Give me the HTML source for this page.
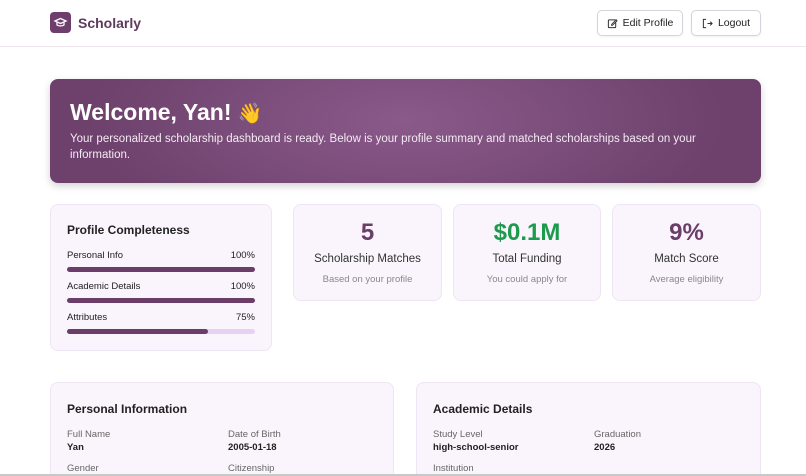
<!DOCTYPE html>
<html style="width:806px;height:476px;overflow:hidden"><head><meta charset="utf-8"><style>
*{box-sizing:border-box;margin:0;padding:0}
body{width:806px;height:476px;overflow:hidden;background:#fff;font-family:"Liberation Sans",sans-serif;color:#222;position:relative}
.hdr{position:absolute;left:0;top:0;width:806px;height:47px;border-bottom:1px solid #efe6f0;background:#fff}
.logo{position:absolute;left:50px;top:12px;width:21px;height:21px;border-radius:4px;background:#6e3f6c}
.brand{position:absolute;left:78px;top:15px;font-size:14px;font-weight:bold;color:#5e3a5d}
.btn{position:absolute;top:10px;height:26px;border:1px solid #d8d2da;border-radius:5px;font-size:10.5px;display:flex;align-items:center;justify-content:center;gap:5px;color:#222;box-shadow:0 1px 2px rgba(0,0,0,.06)}
.banner{position:absolute;left:50px;top:79px;width:711px;height:104px;border-radius:8px;background:radial-gradient(ellipse 400px 160px at 50% 40%,#8a5a8a,#6d416c 80%);box-shadow:0 3px 8px rgba(0,0,0,.18);color:#fff}
.banner h1{position:absolute;left:20px;top:20px;font-size:23px;font-weight:bold}
.banner p{position:absolute;left:20px;top:52px;width:680px;font-size:11.5px;line-height:16px;color:#f3eaf3}
.card{position:absolute;background:#faf5fd;border:1px solid #efe4f3;border-radius:8px}
.ct{font-size:12px;font-weight:bold;color:#222}
.row{position:absolute;left:16px;right:16px;font-size:9.5px;display:flex;justify-content:space-between}
.bar{position:absolute;left:16px;right:16px;height:5px;border-radius:3px;background:#6b3d69}
.stat{text-align:center}
.stat .n{position:absolute;left:0;right:0;top:14px;font-size:24px;font-weight:bold;color:#6b3d69}
.stat .l{position:absolute;left:0;right:0;top:48px;font-size:11.5px;color:#333}
.stat .s{position:absolute;left:0;right:0;top:69px;font-size:9.5px;color:#888}
.lab{position:absolute;font-size:9.5px;color:#666}
.val{position:absolute;font-size:9.5px;font-weight:bold;color:#222}
</style></head><body>
<div class="hdr">
<div class="logo"><svg width="21" height="21" viewBox="0 0 21 21"><path d="M5 9l5.5-2.5L16 9l-5.5 2.5z" fill="none" stroke="#fff" stroke-width="1.3"/><path d="M7 10.5v2.5c2 1.3 5 1.3 7 0v-2.5" fill="none" stroke="#fff" stroke-width="1.3"/></svg></div>
<div class="brand">Scholarly</div>
<div class="btn" style="left:597px;width:86px"><svg width="11" height="11" viewBox="0 0 12 12"><rect x="1.5" y="2" width="8" height="8.5" rx="1" fill="none" stroke="#333" stroke-width="1.1"/><path d="M5 7l5-5 1 1-5 5H5z" fill="#fff" stroke="#333" stroke-width="1"/></svg>Edit Profile</div>
<div class="btn" style="left:691px;width:70px"><svg width="11" height="11" viewBox="0 0 12 12"><path d="M4.5 1.5h-3v9h3M6 6h5M9 4l2 2-2 2" fill="none" stroke="#333" stroke-width="1.1"/></svg>Logout</div>
</div>
<div class="banner"><h1>Welcome, Yan! <span style="font-size:20px">👋</span></h1>
<p>Your personalized scholarship dashboard is ready. Below is your profile summary and matched scholarships based on your information.</p></div>

<div class="card" style="left:50px;top:204px;width:222px;height:147px">
<div class="ct" style="position:absolute;left:16px;top:18px">Profile Completeness</div>
<div class="row" style="top:45px"><span>Personal Info</span><span>100%</span></div>
<div class="bar" style="top:62px"></div>
<div class="row" style="top:76px"><span>Academic Details</span><span>100%</span></div>
<div class="bar" style="top:93px"></div>
<div class="row" style="top:107px"><span>Attributes</span><span>75%</span></div>
<div class="bar" style="top:124px;background:#e6d3f3"><div style="width:75%;height:5px;border-radius:3px;background:#6b3d69"></div></div>
</div>

<div class="card stat" style="left:293px;top:204px;width:149px;height:97px"><div class="n">5</div><div class="l">Scholarship Matches</div><div class="s">Based on your profile</div></div>
<div class="card stat" style="left:453px;top:204px;width:148px;height:97px"><div class="n" style="color:#1e9a4e">$0.1M</div><div class="l">Total Funding</div><div class="s">You could apply for</div></div>
<div class="card stat" style="left:612px;top:204px;width:149px;height:97px"><div class="n">9%</div><div class="l">Match Score</div><div class="s">Average eligibility</div></div>

<div class="card" style="left:50px;top:382px;width:344px;height:100px">
<div class="ct" style="position:absolute;left:16px;top:19px">Personal Information</div>
<div class="lab" style="left:16px;top:46px">Full Name</div><div class="val" style="left:16px;top:59px">Yan</div>
<div class="lab" style="left:177px;top:46px">Date of Birth</div><div class="val" style="left:177px;top:59px">2005-01-18</div>
<div class="lab" style="left:16px;top:80px">Gender</div>
<div class="lab" style="left:177px;top:80px">Citizenship</div>
</div>
<div class="card" style="left:416px;top:382px;width:345px;height:100px">
<div class="ct" style="position:absolute;left:16px;top:19px">Academic Details</div>
<div class="lab" style="left:16px;top:46px">Study Level</div><div class="val" style="left:16px;top:59px">high-school-senior</div>
<div class="lab" style="left:177px;top:46px">Graduation</div><div class="val" style="left:177px;top:59px">2026</div>
<div class="lab" style="left:16px;top:80px">Institution</div>
</div>
<div style="position:absolute;left:0;top:474px;width:806px;height:2px;background:#c8c8c8"></div>
</body></html>
